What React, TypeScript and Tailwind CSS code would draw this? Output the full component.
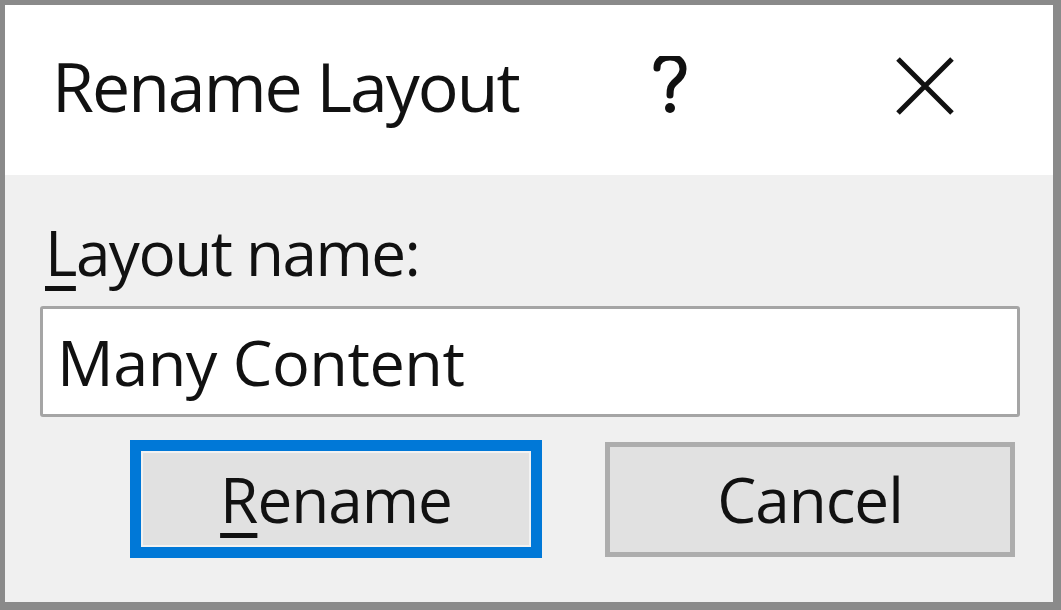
export default function App() {
  return (
    <div className="w-[1061px] h-[610px] bg-[#f0f0f0] border-[#8a8a8a] border-l-[5px] border-t-[5px] border-r-[8px] border-b-[8px] flex flex-col text-[#111] font-medium"
      style={{ fontFamily: '"Open Sans", "Noto Sans", sans-serif' }}>
      {/* Title bar */}
      <div className="h-[170px] bg-white flex items-center shrink-0">
        <span className="ml-[47px] text-[68px] leading-none tracking-[-2px] mt-[-8px]">Rename Layout</span>
        <div className="ml-auto flex items-center mr-[98px] mt-[-8px]">
          <svg width="36" height="60" viewBox="0 0 36 60" className="mr-[207px]">
            <path d="M5 12 C5 4 11 1 18 1 C26 1 31 6 31 13 C31 20 26 23 22 27 C19 30 18 32 18 39" fill="none" stroke="#111" strokeWidth="7" strokeLinecap="round" />
            <circle cx="18" cy="52" r="5" fill="#111" />
          </svg>
          <svg width="60" height="60" viewBox="0 0 60 60">
            <path d="M3 3 L57 57 M57 3 L3 57" stroke="#111" strokeWidth="5" />
          </svg>
        </div>
      </div>

      {/* Body */}
      <div className="flex-1 flex flex-col pl-[35px] pr-[33px]">
        <label className="mt-[45px] ml-[5px] text-[62px] leading-[64px] tracking-[-1.5px]">
          <span className="underline underline-offset-[10px] decoration-[5px]">L</span>ayout name:
        </label>
        <div className="mt-[22px] h-[111px] bg-white border-[3px] border-[#a5a5a5] rounded-[3px] flex items-center pl-[14px]">
          <span className="text-[63px] leading-none tracking-[-0.5px]">Many Content</span>
        </div>
        <div className="mt-[23px] flex items-center gap-[63px] ml-[90px]">
          <button className="w-[412px] h-[118px] border-[11px] border-[#0078d7] bg-[#e1e1e1] flex items-center justify-center">
            <span className="w-full h-full border-[2px] border-[#f2f2f2] flex items-center justify-center text-[62px] leading-none tracking-[-1px]">
              <span className="underline underline-offset-[10px] decoration-[5px]">R</span>ename
            </span>
          </button>
          <button className="w-[410px] h-[115px] border-[5px] border-[#adadad] bg-[#e1e1e1] flex items-center justify-center text-[62px] leading-none tracking-[-1px]">
            Cancel
          </button>
        </div>
      </div>
    </div>
  );
}
